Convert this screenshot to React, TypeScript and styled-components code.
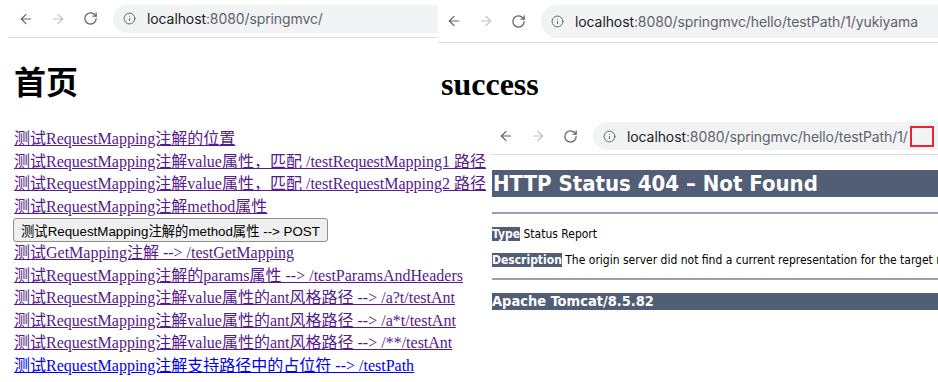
import React from "react"
import styled, { createGlobalStyle } from "styled-components"
import { ArrowLeft, ArrowRight, RotateCw, Info } from "lucide-react"

const GlobalStyle = createGlobalStyle`
  html, body {
    margin: 0;
    padding: 0;
    background: #fff;
  }
`

// desktop + windows
const Desktop = styled.div`
  position: relative;
  width: 938px;
  height: 382px;
  overflow: hidden;
  background: #fff;
`

const Window = styled.div<{ $x: number; $y: number; $w: number; $h: number }>`
  position: absolute;
  left: ${(p) => p.$x}px;
  top: ${(p) => p.$y}px;
  width: ${(p) => p.$w}px;
  height: ${(p) => p.$h}px;
  background: #fff;
  overflow: hidden;
  display: flex;
  flex-direction: column;
`

// chrome toolbar
const Toolbar = styled.div<{ $h: number; $pad: number; $line: number }>`
  display: flex;
  align-items: center;
  flex: none;
  height: ${(p) => p.$h}px;
  padding-left: ${(p) => p.$pad}px;
  border-bottom: 1px solid #dadce0;
  margin-left: ${(p) => p.$line}px;
`

const NavButton = styled.span<{ $off?: boolean }>`
  display: flex;
  align-items: center;
  justify-content: center;
  width: 32px;
  flex: none;
  color: ${(p) => (p.$off ? "#bdc1c6" : "#5f6368")};
`

const Omnibox = styled.div<{ $h: number }>`
  display: flex;
  align-items: center;
  gap: 11px;
  flex: 1;
  height: ${(p) => p.$h}px;
  margin-left: 7px;
  padding-left: 10px;
  border-radius: ${(p) => p.$h / 2}px 0 0 ${(p) => p.$h / 2}px;
  background: #f1f3f4;
  color: #5f6368;
  white-space: nowrap;
  overflow: hidden;
`

const UrlText = styled.span`
  font-family: Inter, "Noto Sans", sans-serif;
  font-size: 14px;
  letter-spacing: -0.1px;
  color: #5f6368;
  display: flex;
  align-items: center;
`

const Host = styled.span`
  color: #202124;
`

const Marker = styled.span`
  display: inline-block;
  width: 20px;
  height: 17px;
  margin-left: 2px;
  border: 2px solid #e8262b;
`

// index page
const IndexPage = styled.div`
  padding: 0 0 0 14px;
  font-family: "Liberation Serif", "Noto Sans CJK SC", serif;
  white-space: nowrap;
`

const IndexTitle = styled.h1`
  margin: 25px 0 0;
  font-size: 32px;
  line-height: 40px;
  font-weight: bold;
  color: #000;
`

const LinkList = styled.div`
  display: flex;
  flex-direction: column;
  align-items: flex-start;
  margin-top: 25px;
`

const Link = styled.a<{ $fresh?: boolean }>`
  font-size: 16px;
  line-height: 22.5px;
  color: ${(p) => (p.$fresh ? "#0000ee" : "#551a8b")};
  text-decoration: underline;
`

const PostButton = styled.button`
  margin: 0 0 0 -1px;
  height: 24px;
  padding: 0 7px;
  font-family: "Liberation Sans", "Noto Sans CJK SC", sans-serif;
  font-size: 13.33px;
  color: #000;
  background: #efefef;
  border: 1px solid #8f8f8f;
  border-radius: 3px;
`

// success page
const SuccessTitle = styled.h1`
  margin: 21px 0 0 3px;
  font-family: "Liberation Serif", serif;
  font-size: 32px;
  line-height: 40px;
  font-weight: bold;
  color: #000;
`

// tomcat error page
const ErrorPage = styled.div`
  padding: 0 0 0 2px;
  font-family: "DejaVu Sans Condensed", "DejaVu Sans", sans-serif;
  white-space: nowrap;
`

const ErrorTitle = styled.h1`
  margin: 15px 0 0;
  height: 27px;
  padding-left: 1px;
  font-size: 22px;
  line-height: 27px;
  font-weight: bold;
  color: #fff;
  background: #525d76;
`

const Rule = styled.div<{ $top: number }>`
  height: 2px;
  margin-top: ${(p) => p.$top}px;
  background: #9aa0b2;
`

const Para = styled.p<{ $top: number }>`
  margin: ${(p) => p.$top}px 0 0;
  font-size: 12px;
  line-height: 14px;
  color: #000;
`

const Label = styled.b`
  color: #fff;
  background: #525d76;
`

const Footer = styled.h3`
  margin: 13px 0 0;
  height: 17px;
  font-size: 14.5px;
  line-height: 17px;
  font-weight: bold;
  color: #fff;
  background: #525d76;
`

const links = [
  "测试RequestMapping注解的位置",
  "测试RequestMapping注解value属性，匹配 /testRequestMapping1 路径",
  "测试RequestMapping注解value属性，匹配 /testRequestMapping2 路径",
  "测试RequestMapping注解method属性",
]

const moreLinks = [
  "测试GetMapping注解 --> /testGetMapping",
  "测试RequestMapping注解的params属性 --> /testParamsAndHeaders",
  "测试RequestMapping注解value属性的ant风格路径 --> /a?t/testAnt",
  "测试RequestMapping注解value属性的ant风格路径 --> /a*t/testAnt",
  "测试RequestMapping注解value属性的ant风格路径 --> /**/testAnt",
]

const Bar = ({ h, pill, pad, line = 0, host, rest, mark }: { h: number; pill: number; pad: number; line?: number; host: string; rest: string; mark?: boolean }) => (
  <Toolbar $h={h} $pad={pad} $line={line}>
    <NavButton>
      <ArrowLeft size={16} strokeWidth={1.8} />
    </NavButton>
    <NavButton $off>
      <ArrowRight size={16} strokeWidth={1.8} />
    </NavButton>
    <NavButton>
      <RotateCw size={15} strokeWidth={2} />
    </NavButton>
    <Omnibox $h={pill}>
      <Info size={13} strokeWidth={1.8} />
      <UrlText>
        <Host>{host}</Host>
        {rest}
        {mark && <Marker />}
      </UrlText>
    </Omnibox>
  </Toolbar>
)

const App = () => {
  return (
    <>
      <GlobalStyle />
      <Desktop>
        <Window $x={0} $y={0} $w={938} $h={382}>
          <Bar h={37} pill={28} pad={2} line={8} host="localhost" rest=":8080/springmvc/" />
          <IndexPage>
            <IndexTitle>首页</IndexTitle>
            <LinkList>
              {links.map((t) => (
                <Link key={t} href="#">{t}</Link>
              ))}
              <PostButton>测试RequestMapping注解的method属性 --&gt; POST</PostButton>
              {moreLinks.map((t) => (
                <Link key={t} href="#">{t}</Link>
              ))}
              <Link $fresh href="#">测试RequestMapping注解支持路径中的占位符 --&gt; /testPath</Link>
            </LinkList>
          </IndexPage>
        </Window>

        <Window $x={438} $y={0} $w={500} $h={114}>
          <Bar h={42} pill={33} pad={0} host="localhost" rest=":8080/springmvc/hello/testPath/1/yukiyama" />
          <SuccessTitle>success</SuccessTitle>
        </Window>

        <Window $x={490} $y={118} $w={448} $h={205}>
          <Bar h={36} pill={28} pad={0} host="localhost" rest=":8080/springmvc/hello/testPath/1/" mark />
          <ErrorPage>
            <ErrorTitle>HTTP Status 404 – Not Found</ErrorTitle>
            <Rule $top={15} />
            <Para $top={13}>
              <Label>Type</Label> Status Report
            </Para>
            <Para $top={12}>
              <Label>Description</Label> The origin server did not find a current representation for the target resource or is not willing to disclose that one exists.
            </Para>
            <Rule $top={11} />
            <Footer>Apache Tomcat/8.5.82</Footer>
          </ErrorPage>
        </Window>
      </Desktop>
    </>
  )
}

export default App
